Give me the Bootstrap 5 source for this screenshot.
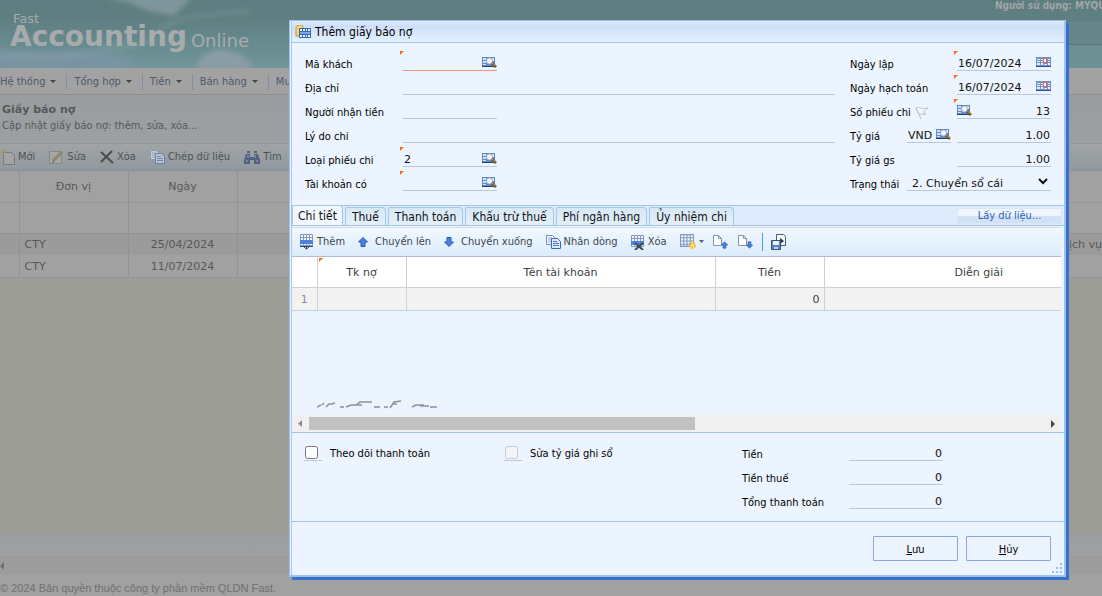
<!DOCTYPE html>
<html lang="vi">
<head>
<meta charset="utf-8">
<meta name="viewport" content="width=device-width, initial-scale=1">
<title>Fast Accounting Online</title>
<link href="https://cdn.jsdelivr.net/npm/bootstrap@5.3.0/dist/css/bootstrap.min.css" rel="stylesheet">
<style>
  :root { --narrow: "DejaVu Sans Condensed", "DejaVu Sans", sans-serif; --wide: "DejaVu Sans", sans-serif; --line: #a3c6e8; }
  body { font-family: var(--narrow); font-size: 11px; line-height: 16px; color: #000; background: #a1a1a1; overflow: hidden; }
  svg { display: block; flex: none; }
  button, input, select { font: inherit; }

  /* dimmed page behind the dialog */
  .page { min-height: 100vh; color: #585858; }
  .banner { height: 68px; background: linear-gradient(#5d7d80, #607f82 30%, #668a8e 60%, #70959a); color: #a8abab; overflow: hidden; }
  .banner > svg { position: absolute; left: 0; top: 0; }
  .banner-side { position: absolute; right: 0; top: 0; width: 107px; }
  .banner-side p { height: 22px; font-size: 10px; line-height: 12px; font-weight: bold; color: #a0a6a6; margin: 0; white-space: nowrap; }
  .banner-side .band-a { height: 23px; background: #678689; border-bottom: 1px solid #56777a; }
  .banner-side .band-b { height: 23px; background: #6d9095; }
  .brand { position: relative; font-family: var(--wide); padding: 11px 0 0 10px; }
  .brand-top { font-size: 13px; line-height: 16px; padding-left: 3px; }
  .brand-name { font-size: 28px; line-height: 20px; font-weight: bold; }
  .brand-tail { font-size: 18px; line-height: 20px; padding-top: 4px; }
  .menubar { height: 27px; background: #a2a2a2; border-bottom: 1px solid #8e9090; padding-top: 1px; }
  .menubar a { color: #4c5a6e; text-decoration: none; white-space: nowrap; padding: 0 10px 0 7px; border-right: 1px solid #7e90aa; line-height: 16px; }
  .menubar a:first-child { padding-left: 0; }
  .menubar a::after { content: ""; display: inline-block; border: 3px solid transparent; border-top-color: #444; border-bottom: 0; margin-left: 5px; vertical-align: 2px; }
  .pagehead { height: 49px; background: linear-gradient(#989da0, #9ca0a2); border-bottom: 1px solid #93979a; padding: 7px 2px; }
  .pagehead h1 { font: bold 11px/16px var(--wide); margin: 0; }
  .backtools { height: 27px; background: linear-gradient(#a0a4a5, #90999e); border-bottom: 1px solid #8c9094; gap: 14px; }
  .backtools button { border: 0; background: none; padding: 0; color: #505356; display: flex; gap: 3px; align-items: center; white-space: nowrap; }
  .backgrid { table-layout: fixed; width: 1200px; font-family: var(--wide); font-weight: normal; border-collapse: collapse; background: #a1a1a1; }
  .backgrid th, .backgrid td { border-right: 1px solid #8f9193; padding: 2px 5px 0; height: 22px; font-weight: normal; line-height: 16px; }
  .backgrid th { height: 31px; text-align: center; border-bottom: 1px solid #929495; }
  .backgrid .filter td { height: 31px; border-bottom: 1px solid #929495; }
  .backgrid .odd { background: #9b9b9b; }
  .backgrid tr:last-child td { border-bottom: 1px solid #929495; height: 22px; }
  .backgrid .note { padding-left: 714px; }
  .backbody { background: #9d9e98; }
  .pager { height: 23px; background: linear-gradient(#9b9d9f, #9fa0a1); border-bottom: 1px solid #989898; }
  .backscroll { height: 17px; background: #9d9d9d; }
  .copyright { height: 22px; font: 11px/28px "Liberation Sans", sans-serif; color: #707070; background: #a1a1a1; }

  /* dialog */
  .layer { position: absolute; top: 0; left: 0; right: 0; padding: 20px 36px 20px 289px; }
  .dlg { background: #ebf4ff; border: 1px solid #a0c0f0; border-right-width: 2px; border-bottom-width: 2px; box-shadow: 3px 3px 0 #3572ca; padding: 0 0 0 1px; position: relative; }
  .dlg-inner { border-left: 1px solid #a8c8ee; }
  .dlg-title { height: 22px; padding-left: 3px; gap: 4px; background: linear-gradient(#ddeaff, #cddff8 25%, #e4f0ff); border-bottom: 1px solid var(--line); }
  .dlg-title h2 { font: 12px/20px var(--narrow); margin: 0; }
  .entry { padding: 4px 13px 14px; gap: 15px; }
  .entry-side { width: 201px; flex: none; }
  .line { display: flex; height: 24px; align-items: flex-end; }
  .line > label { width: 98px; line-height: 12px; white-space: nowrap; margin-right: auto; flex: none; }
  .entry-main label { margin-right: 0; }
  .fld { border: 0; border-bottom: 1px solid #b9c9db; height: 18px; width: 94px; display: flex; align-items: center; position: relative; font-family: var(--wide); }
  .fld input, .fld select { border: 0; background: none; outline: 0; padding: 3px 1px 0 1px; width: 100%; min-width: 0; height: 17px; line-height: 14px; color: #111; border-radius: 0; }
  .fld select { appearance: auto; }
  .fld.full { width: auto; flex: 1; }
  .fld.ccy { width: 44px; }
  .fld.ccy input { padding-right: 0; }
  .fld.status { width: 144px; }
  .fld.hot { border-color: #f0957a; }
  .fld.must::before, .mustcell::before { content: ""; position: absolute; left: -3px; top: -2px; border: 2px solid #ff6a00; border-right-color: transparent; border-bottom-color: transparent; }
  .fld button { border: 0; background: none; padding: 0; }
  .short-label label { width: 57px; margin-right: 0; }
  .num { text-align: right; }

  .tabs { height: 21px; border-top: 1px solid var(--line); border-bottom: 1px solid var(--line); background: #deebfd; padding-right: 2px; font-size: 12px; }
  .tabs .nav { gap: 2px; }
  .tabs .nav-link { border: 1px solid #a5c8ea; border-bottom: 0; border-radius: 2px 4px 0 0; background: linear-gradient(#d7e8f5, #e3f0fb); color: #111; padding: 0 6px; height: 18px; line-height: 18px; white-space: nowrap; }
  .tabs .nav-link.active { background: #f2f8ff; height: 20px; line-height: 20px; padding: 0 5px; }
  .fetch { border: 1px solid #d8e6f8; background: linear-gradient(#eef5ff 50%, #d2e2f6 50%); color: #2a63b4; width: 105px; height: 16px; line-height: 14px; padding: 0; font-size: 11px; }
  .tools { height: 30px; margin: 1px 3px 0 0; background: linear-gradient(#f2f8ff, #e4f1fd 60%, #dcecfa); border-top: 1px solid #d3dcea; border-bottom: 1px solid #b4b8d0; padding-left: 8px; gap: 13px; }
  .tools button { display: flex; align-items: center; gap: 3px; border: 0; background: none; padding: 0; color: #40454c; white-space: nowrap; line-height: 18px; }
  .tools .move { gap: 7px; }
  .tools .iconset { gap: 8px; }
  .tools .rule { width: 1px; height: 18px; background: #4a9cf0; }
  .gridbox { height: 158px; overflow: hidden; margin-right: 3px; position: relative; }
  .detail { table-layout: fixed; width: 842px; border-collapse: collapse; font-family: var(--wide); color: #404040; }
  .detail th, .detail td { border-right: 1px solid #ccd0d8; border-bottom: 1px solid #ccd0d8; font-weight: normal; padding: 2px 4px 0; position: relative; }
  .detail th { height: 30px; background: #fff; text-align: center; }
  .detail td { height: 23px; background: #f2f2f2; }
  .detail .rowno { color: #8c8c98; text-align: center; }
  .detail .mustcell::before { left: 1px; top: 1px; }
  .ghost { position: absolute; left: 25px; bottom: 6px; }
  .hscroll { height: 17px; background: #f0f0f0; margin-right: 3px; }
  .hscroll div { width: 386px; height: 13px; background: #c1c1c1; margin-left: 1px; }
  .hscroll svg { margin: 0 5px; }
  .totals { border-top: 1px solid var(--line); border-bottom: 1px solid var(--line); padding: 4px 13px 12px 12px; height: 90px; }
  .totals .tick { width: 200px; gap: 8px; align-items: center; height: 24px; padding-top: 8px; }
  .tick label { padding-top: 2px; }
  .tick .box { width: 18px; height: 15px; border-bottom: 1px solid #b9c9db; display: flex; }
  .tick input { width: 13px; height: 13px; margin: 0 1px; }
  .sums { margin-left: 38px; width: 201px; }
  .actions { height: 53px; padding: 14px 13px; gap: 8px; position: relative; }
  .actions button { width: 85px; height: 25px; border: 1px solid #8ba6de; border-radius: 1px; background: #ecf5ff; padding: 2px 0 0; }
  .grip { position: absolute; right: 2px; bottom: 2px; }
</style>
</head>
<body>
<svg width="0" height="0" class="position-absolute" aria-hidden="true">
  <symbol id="find" viewBox="0 0 15 12"><path d="M0 1h13v9H0z" fill="#5f86c8"/><path d="M1 2h3v2H1zM5 2h2v1H5zM1 5h3v2H1zM1 8h3v1H1zM10 2h2v3h-2z" fill="#d3e4f9"/><path d="M0 10.500h12" stroke="#28406e"/><circle cx="7.500" cy="5" r="3" fill="#f3f8ff" stroke="#a3b3cb"/><path d="M10 7l4 4" stroke="#6b5226" stroke-width="2.500"/><path d="M10.500 7l3 3" stroke="#e8b04a"/></symbol>
  <symbol id="cal" viewBox="0 0 15 10"><rect width="15" height="9" fill="#7090cc"/><path d="M1 2h3v1H1zM5 2h2v1H5zM12 2h2v1h-2zM1 4h3v1H1zM5 4h2v1H5zM12 4h2v1h-2zM1 6h3v2H1zM5 6h2v2H5zM8 7h3v1H8zM12 6h2v2h-2z" fill="#e4effd"/><rect x="7.500" y="1.500" width="3" height="4" fill="#fff" stroke="#e4684e"/><path d="M0 9.500h15" stroke="#34528f"/></symbol>
  <symbol id="copy" viewBox="0 0 15 14"><path d="M.5.5h6l2 2v7h-8z" fill="#f5faff" stroke="#7691bf"/><path d="M2 3h4M2 5h4M2 7h3" stroke="#89a7d8"/><path d="M5.500 3.500h6l3 3v7h-9z" fill="#dceaff" stroke="#4066ae"/><path d="M7 6.500h4M7 8.500h6M7 10.500h6" stroke="#4a79cc"/></symbol>
  <symbol id="mesh" viewBox="0 0 14 12"><path d="M.5.5h12v11H.5zM3.500 0v12M6.500 0v12M9.500 0v12M0 3.500h13M0 6.500h13M0 9.500h13" fill="#f4f8fe" stroke="#8398bd"/></symbol>
  <symbol id="up" viewBox="0 0 10 10"><path d="M5 .5L9.500 5H7v4.500H3V5H.5z" fill="#4b80e4" stroke="#2958b2"/></symbol>
  <symbol id="page" viewBox="0 0 9 11"><path d="M.5.500h5l3 3v7h-8z" fill="#fff" stroke="#8292aa"/><path d="M5.500.500v3h3" fill="none" stroke="#8292aa"/></symbol>
</svg>

<div class="page d-flex flex-column" aria-hidden="true">
  <header class="banner position-relative">
    <svg width="290" height="68"><defs><filter id="soft"><feGaussianBlur stdDeviation="2.500"/></filter></defs>
      <g filter="url(#soft)" fill="#8b9da5"><path d="M105-4h85c2 6-10 10-14 19-18 0-38-7-48-13-8-1-15-1-23-6z" opacity=".75"/><path d="M196 70c2-8 6-16 14-17 8-6 18-2 24 0 8 2 16 6 19 17z"/><path d="M-5 49c35 3 100 2 125 6 14 2 18 8 14 15H-5z" fill="#7a94a4" opacity=".8"/></g>
      <g fill="none" stroke="#84a0a7" opacity=".5" filter="url(#soft)" stroke-width="3"><path d="M160 28c20-12 55-15 90-17M0 53c40 6 90 1 130-11M0 57c50 7 110-2 150-16"/></g></svg>
    <div class="banner-side"><p>Người sử dụng: MYQU</p><div class="band-a"></div><div class="band-b"></div></div>
    <div class="brand"><div class="brand-top">Fast</div><div class="d-flex"><span class="brand-name">Accounting</span><span class="brand-tail ms-1">Online</span></div></div>
  </header>
  <nav class="menubar d-flex align-items-center"><a href="#">Hệ thống</a><a href="#">Tổng hợp</a><a href="#">Tiền</a><a href="#">Bán hàng</a><a href="#">Mua</a></nav>
  <div class="pagehead"><h1>Giấy báo nợ</h1><div>Cập nhật giấy báo nợ: thêm, sửa, xóa...</div></div>
  <div class="backtools d-flex align-items-center">
    <button><svg width="15" height="15"><path d="M3.500 2.500h8l3 3v9h-11z" fill="#a2a4a5" stroke="#777b7e"/><path d="M1 2h5M3 0v5M1 4l4-4" stroke="#aa965c"/></svg>Mới</button>
    <button><svg width="15" height="15"><path d="M.5 1.500h12v12H.5z" fill="#a4a7a8" stroke="#85898b"/><path d="M4 11l9-9" stroke="#8d875e" stroke-width="3"/><path d="M3 13l2-2" stroke="#555"/></svg>Sửa</button>
    <button><svg width="14" height="14"><path d="M1 2l12 11M12 1L1 12" stroke="#4c4c4c" stroke-width="2"/></svg>Xóa</button>
    <button><svg width="15" height="14" opacity=".5"><use href="#copy"/></svg>Chép dữ liệu</button>
    <button><svg width="16" height="13"><path d="M2 3h4v3h4V3h4l2 6v4h-6V9H6v4H0V9zM3 0h3v2H3zM10 0h3v2h-3z" fill="#526180"/><path d="M2 10h2M12 10h2M4 4v3M11 4v3" stroke="#9ba7ba"/></svg>Tìm</button>
  </div>
  <div class="backbody flex-grow-1 overflow-hidden">
    <table class="backgrid">
      <colgroup><col style="width:19px"><col style="width:109px"><col style="width:109px"><col style="width:109px"><col></colgroup>
      <tr><th></th><th>Đơn vị</th><th>Ngày</th><th></th><th></th></tr>
      <tr class="filter"><td></td><td></td><td></td><td></td><td></td></tr>
      <tr class="odd"><td></td><td>CTY</td><td class="text-center">25/04/2024</td><td></td><td class="note">Dịch vụ</td></tr>
      <tr><td></td><td>CTY</td><td class="text-center">11/07/2024</td><td></td><td></td></tr>
    </table>
  </div>
  <div class="pager"></div>
  <div class="backscroll d-flex align-items-center"><svg width="5" height="8"><path d="M4 0v8L0 4z" fill="#707070"/></svg></div>
  <footer class="copyright">© 2024 Bản quyền thuộc công ty phần mềm QLDN Fast.</footer>
</div>

<div class="layer">
<section class="dlg" role="dialog" aria-labelledby="dlgTitle"><div class="dlg-inner">
  <div class="dlg-title d-flex align-items-center">
    <svg width="16" height="14"><path d="M1 2l2-2h4l1 2v9H1z" fill="#f6d572" stroke="#c69b35"/><rect x="4" y="3" width="12" height="10" fill="#3967b5"/><path d="M5 4h2v2H5zM8 4h2v2H8zM11 4h1v2h-1zM13 4h2v2h-2zM5 10h2v2H5zM8 10h2v2H8zM11 10h1v2h-1zM13 10h2v2h-2z" fill="#eef6ff"/><path d="M5 7h10v2H5z" fill="#77a5ea"/></svg>
    <h2 id="dlgTitle">Thêm giấy báo nợ</h2>
  </div>

  <div class="entry d-flex">
    <div class="entry-main flex-grow-1">
      <div class="line"><label for="f1">Mã khách</label><div class="fld must hot"><input id="f1"><button aria-label="Tìm"><svg width="15" height="12"><use href="#find"/></svg></button></div></div>
      <div class="line"><label for="f2">Địa chỉ</label><div class="fld full"><input id="f2"></div></div>
      <div class="line"><label for="f3">Người nhận tiền</label><div class="fld"><input id="f3"></div></div>
      <div class="line"><label for="f4">Lý do chi</label><div class="fld full"><input id="f4"></div></div>
      <div class="line"><label for="f5">Loại phiếu chi</label><div class="fld must"><input id="f5" value="2"><button aria-label="Tìm"><svg width="15" height="12"><use href="#find"/></svg></button></div></div>
      <div class="line"><label for="f6">Tài khoản có</label><div class="fld must"><input id="f6"><button aria-label="Tìm"><svg width="15" height="12"><use href="#find"/></svg></button></div></div>
    </div>
    <div class="entry-side">
      <div class="line"><label for="g1">Ngày lập</label><div class="fld must"><input id="g1" value="16/07/2024"><button aria-label="Lịch"><svg width="15" height="10"><use href="#cal"/></svg></button></div></div>
      <div class="line"><label for="g2">Ngày hạch toán</label><div class="fld must"><input id="g2" value="16/07/2024"><button aria-label="Lịch"><svg width="15" height="10"><use href="#cal"/></svg></button></div></div>
      <div class="line"><label for="g3" class="d-flex gap-1">Số phiếu chi <svg width="14" height="12"><path d="M1 1c3-2 5 2 12 0L8 5l3 2c-3 1-5 0-7 0zM1 1l5 11" fill="#f4f8fc" stroke="#bfc2c6"/></svg></label><div class="fld must"><button aria-label="Tìm"><svg width="15" height="12"><use href="#find"/></svg></button><input class="num" id="g3" value="13"></div></div>
      <div class="line short-label"><label for="g4">Tỷ giá</label><div class="fld ccy"><input aria-label="Loại tiền" value="VND"><button aria-label="Tìm"><svg width="15" height="12"><use href="#find"/></svg></button></div><div class="fld ms-auto"><input class="num" id="g4" value="1.00"></div></div>
      <div class="line"><label for="g5">Tỷ giá gs</label><div class="fld"><input class="num" id="g5" value="1.00"></div></div>
      <div class="line short-label"><label for="g6">Trạng thái</label><div class="fld status"><select id="g6"><option>2. Chuyển sổ cái</option></select></div></div>
    </div>
  </div>

  <div class="tabs d-flex justify-content-between align-items-center">
    <div class="nav flex-nowrap align-self-end align-items-end" role="tablist">
      <button class="nav-link active" role="tab">Chi tiết</button><button class="nav-link" role="tab">Thuế</button><button class="nav-link" role="tab">Thanh toán</button><button class="nav-link" role="tab">Khấu trừ thuế</button><button class="nav-link" role="tab">Phí ngân hàng</button><button class="nav-link" role="tab">Ủy nhiệm chi</button>
    </div>
    <button class="fetch">Lấy dữ liệu...</button>
  </div>

  <div class="tools d-flex align-items-center">
    <button><svg width="14" height="16"><use href="#mesh" width="14" height="12"/><path d="M0 6h13v4H0z" fill="#4d83dc"/><path d="M0 12.500h13M6.500 12v3M4 13l2.500 2L9 13" fill="none" stroke="#33496f"/></svg>Thêm</button>
    <button class="move"><svg width="10" height="10"><use href="#up"/></svg>Chuyển lên</button>
    <button class="move"><svg width="10" height="10"><use href="#up" transform="rotate(180 5 5)"/></svg>Chuyển xuống</button>
    <button><svg width="15" height="14"><use href="#copy"/></svg>Nhân dòng</button>
    <button><svg width="14" height="15"><use href="#mesh" width="14" height="12"/><path d="M0 6h13v4H0z" fill="#4d83dc"/><path d="M4 8l8 7M12 8l-8 7" stroke="#404754" stroke-width="2"/></svg>Xóa</button>
    <div class="iconset d-flex align-items-center">
      <button aria-label="Thêm cột"><svg width="16" height="16"><use href="#mesh" width="15" height="13"/><circle cx="12.500" cy="11.500" r="2.500" fill="#ffe27a" stroke="#f3b92b" stroke-width="2" stroke-dasharray="2 1"/></svg><svg width="5" height="4"><path d="M0 0h5L2.500 3z" fill="#4b6384"/></svg></button>
      <button aria-label="Nhập"><svg width="17" height="15"><use href="#page" x="1" width="9" height="11"/><use href="#up" x="9" y="6" width="7" height="8"/></svg></button>
      <button aria-label="Xuất"><svg width="17" height="15"><use href="#page" x="1" width="9" height="11"/><use href="#up" width="7" height="8" transform="translate(16 14) rotate(180)"/></svg></button>
      <span class="rule"></span>
      <button aria-label="Lưu tệp"><svg width="16" height="16"><path d="M5.500.500h7l2 2v9h-9z" fill="#f4f6f8" stroke="#505d6c"/><path d="M9 4l4 3-4 3z" fill="#2c3640"/><path d="M.5 6.500h9v9h-9z" fill="#5784c2" stroke="#34517f"/><path d="M2 7h6v4H2z" fill="#eaf2fc"/><path d="M3 13h4v2H3z" fill="#c2d2e6"/></svg></button>
    </div>
  </div>
  <div class="gridbox">
    <table class="detail">
      <colgroup><col style="width:25px"><col style="width:89px"><col style="width:309px"><col style="width:109px"><col></colgroup>
      <tr><th></th><th class="mustcell">Tk nợ</th><th>Tên tài khoản</th><th>Tiền</th><th>Diễn giải</th></tr>
      <tr><td class="rowno">1</td><td></td><td></td><td class="num">0</td><td></td></tr>
    </table>
    <svg class="ghost" width="122" height="9"><g fill="none" stroke="#8e9198" stroke-width="1.500"><path d="M0 7l4-2M5 5l2-2M9 7l3-3h2l4-1M23 7h4M29 7l5-2h5l4-3h12M35 5h10M57 7h6M67 7h4M73 8l4-6 7-1M76 4h4M95 7l4-2h8M103 6h9M113 7h7"/></g></svg>
  </div>
  <div class="hscroll d-flex align-items-center"><svg width="6" height="7"><path d="M5 0v7L1 3.500z" fill="#8c8c8c"/></svg><div></div><svg class="ms-auto" width="6" height="8"><path d="M1 0v8l4-4z" fill="#444"/></svg></div>

  <div class="totals d-flex">
    <div class="tick d-flex"><span class="box"><input type="checkbox" id="c1"></span><label for="c1">Theo dõi thanh toán</label></div>
    <div class="tick d-flex"><span class="box"><input type="checkbox" id="c2" disabled></span><label for="c2">Sửa tỷ giá ghi sổ</label></div>
    <div class="sums">
      <div class="line"><label for="s1">Tiền</label><div class="fld"><input class="num" id="s1" value="0"></div></div>
      <div class="line"><label for="s2">Tiền thuế</label><div class="fld"><input class="num" id="s2" value="0"></div></div>
      <div class="line"><label for="s3">Tổng thanh toán</label><div class="fld"><input class="num" id="s3" value="0"></div></div>
    </div>
  </div>
  <div class="actions d-flex justify-content-end">
    <button><span><u>L</u>ưu</span></button><button><span><u>H</u>ủy</span></button>
    <svg class="grip" width="10" height="10"><path d="M8 0h2v2H8zM4 4h2v2H4zM8 4h2v2H8zM0 8h2v2H0zM4 8h2v2H4zM8 8h2v2H8z" fill="#94c1f5"/></svg>
  </div>
</div></section>
</div>
<script src="https://cdn.jsdelivr.net/npm/bootstrap@5.3.0/dist/js/bootstrap.bundle.min.js"></script>
</body>
</html>
